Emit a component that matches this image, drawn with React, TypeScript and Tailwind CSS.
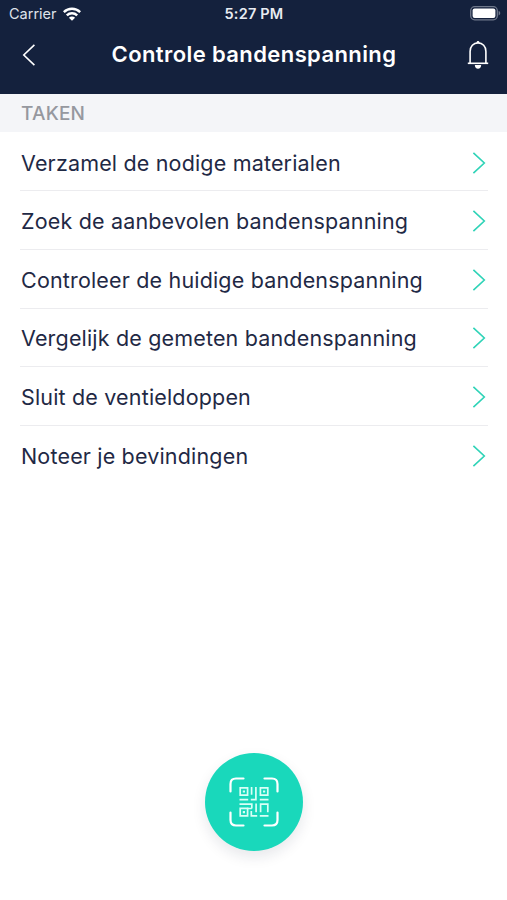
import { ReactNode } from 'react'

const TASKS = [
    'Verzamel de nodige materialen',
    'Zoek de aanbevolen bandenspanning',
    'Controleer de huidige bandenspanning',
    'Vergelijk de gemeten bandenspanning',
    'Sluit de ventieldoppen',
    'Noteer je bevindingen',
]

function WifiIcon() {
    return (
        <svg width="18" height="14" viewBox="0 0 18 14" fill="none" stroke="white" strokeWidth="2.5">
            <path d="M0.8 5.1C5.4 0.7 12.6 0.7 17.2 5.1" />
            <path d="M3.8 8.4C6.8 5.6 11.2 5.6 14.2 8.4" />
            <path d="M9 13.8L5.9 10.8C7.7 9.2 10.3 9.2 12.1 10.8Z" fill="white" stroke="none" />
        </svg>
    )
}

function BatteryIcon() {
    return (
        <svg width="31" height="15" viewBox="0 0 31 15" fill="none">
            <rect x="0.7" y="0.7" width="26.6" height="13.1" rx="4" stroke="#6f788b" strokeWidth="1.3" />
            <rect x="2.6" y="2.6" width="22.8" height="9.3" rx="2" fill="white" />
            <path d="M28.6 5.1C30.8 5.7 30.8 8.8 28.6 9.4Z" fill="#6f788b" />
        </svg>
    )
}

function BellIcon() {
    return (
        <svg width="22" height="30" viewBox="0 0 22 30" fill="none" stroke="white" strokeWidth="1.6">
            <path d="M3.1 23V11.4C3.1 6.3 6.4 2.9 11 2.9S18.9 6.3 18.9 11.4V23" />
            <path d="M0.8 23.3H21.2" />
            <path d="M9.5 2.9C9.5 0.4 12.5 0.4 12.5 2.9Z" fill="white" stroke="none" />
            <path d="M7.8 25H14.2C14 27.5 12.9 28.8 11 28.8S8 27.5 7.8 25Z" fill="white" stroke="none" />
        </svg>
    )
}

function Chevron() {
    return (
        <svg
            className="shrink-0"
            width="14"
            height="22"
            viewBox="0 0 14 22"
            fill="none"
            stroke="#2ed3b7"
            strokeWidth="1.6"
        >
            <path d="M1.4 0.9L12.3 11L1.4 21.1" />
        </svg>
    )
}

function QrIcon() {
    return (
        <svg width="50" height="50" viewBox="0 0 50 50" fill="none" stroke="white">
            {/* Scan frame */}
            <path
                d="M1.5 14.5V7Q1.5 1.5 7 1.5H14.5M35.5 1.5H43Q48.5 1.5 48.5 7V14.5M48.5 35.5V43Q48.5 48.5 43 48.5H35.5M14.5 48.5H7Q1.5 48.5 1.5 43V35.5"
                strokeWidth="2.2"
                strokeLinecap="round"
            />
            {/* Code */}
            <g stroke="#d9fff6" strokeWidth="1.7">
                <path d="M11.2 10.8H18.6V18.2H11.2ZM31.4 10.8H38.8V18.2H31.4ZM11.2 31.4H18.6V38.8H11.2Z" />
                <path d="M13.8 14.5H16M34 14.5H36.2M13.8 35.1H16" strokeWidth="2.2" />
                <path d="M22.6 10V17.8M26.9 10V22.6H21.8M10.5 22.6H19.2M30.8 22.6H39.5" />
                <path d="M10.5 27.2H22.8V31.5M18 31.5H22.8M22.3 34V38.8H28.2M27.1 26.5V35.3" />
                <path d="M31.6 35.3V27.2H38.8V35.3M30.8 38.8H39.5" />
            </g>
        </svg>
    )
}

function TaskRow({ children, last }: { children: ReactNode; last: boolean }) {
    return (
        <li
            className={
                last
                    ? 'flex h-[58.6px] items-center justify-between pl-px pr-[2px] pt-[2px]'
                    : 'flex h-[58.6px] items-center justify-between border-b-[1.5px] border-[#ececef] pl-px pr-[2px] pt-[2px]'
            }
        >
            <span className="whitespace-nowrap text-[21.5px] leading-7 tracking-[0.17px] text-[#1f2945]">{children}</span>
            <Chevron />
        </li>
    )
}

export default function App() {
    return (
        <div className="flex h-[900px] w-[507px] flex-col overflow-hidden bg-white font-['Inter',sans-serif]">
            <header className="h-[94px] shrink-0 bg-[#14213d] text-white">
                {/* Status bar */}
                <div className="grid h-[27px] grid-cols-3 items-center pl-[9px] pr-[6px]">
                    <div className="flex items-center gap-[6px] text-[14.5px] text-[#dfe3ea]">
                        <span>Carrier</span>
                        <WifiIcon />
                    </div>
                    <span className="pr-[2px] text-center text-[14.5px] font-semibold tracking-[0.2px] text-[#e8ecf2]">
                        5:27 PM
                    </span>
                    <div className="flex justify-end">
                        <BatteryIcon />
                    </div>
                </div>

                {/* Title bar */}
                <div className="flex h-[55px] items-center justify-between pl-[22px] pr-[18px]">
                    <svg
                        className="mr-[5px]"
                        width="14"
                        height="22"
                        viewBox="0 0 14 22"
                        fill="none"
                        stroke="white"
                        strokeWidth="1.6"
                    >
                        <path d="M12.4 0.9L1.8 11L12.4 21.1" />
                    </svg>
                    <h1 className="whitespace-nowrap text-[22px] font-semibold tracking-[0.4px]">Controle bandenspanning</h1>
                    <BellIcon />
                </div>
            </header>

            <h2 className="flex h-[38px] shrink-0 items-center bg-[#f4f5f8] pl-[21px] pt-[3px] text-[19px] font-medium tracking-[0.2px] text-[#96989f]">
                TAKEN
            </h2>

            <ul className="ml-[20px] mr-[19px] pt-[0.8px]">
                {TASKS.map((task, index) => (
                    <TaskRow key={task} last={index === TASKS.length - 1}>
                        {task}
                    </TaskRow>
                ))}
            </ul>

            <div className="mt-auto flex justify-center pb-[49px]">
                <button
                    aria-label="Scan"
                    className="flex size-[98px] items-center justify-center rounded-full bg-[#19d8bb] shadow-[0_6px_14px_rgba(20,33,61,0.1)]"
                >
                    <QrIcon />
                </button>
            </div>
        </div>
    )
}
